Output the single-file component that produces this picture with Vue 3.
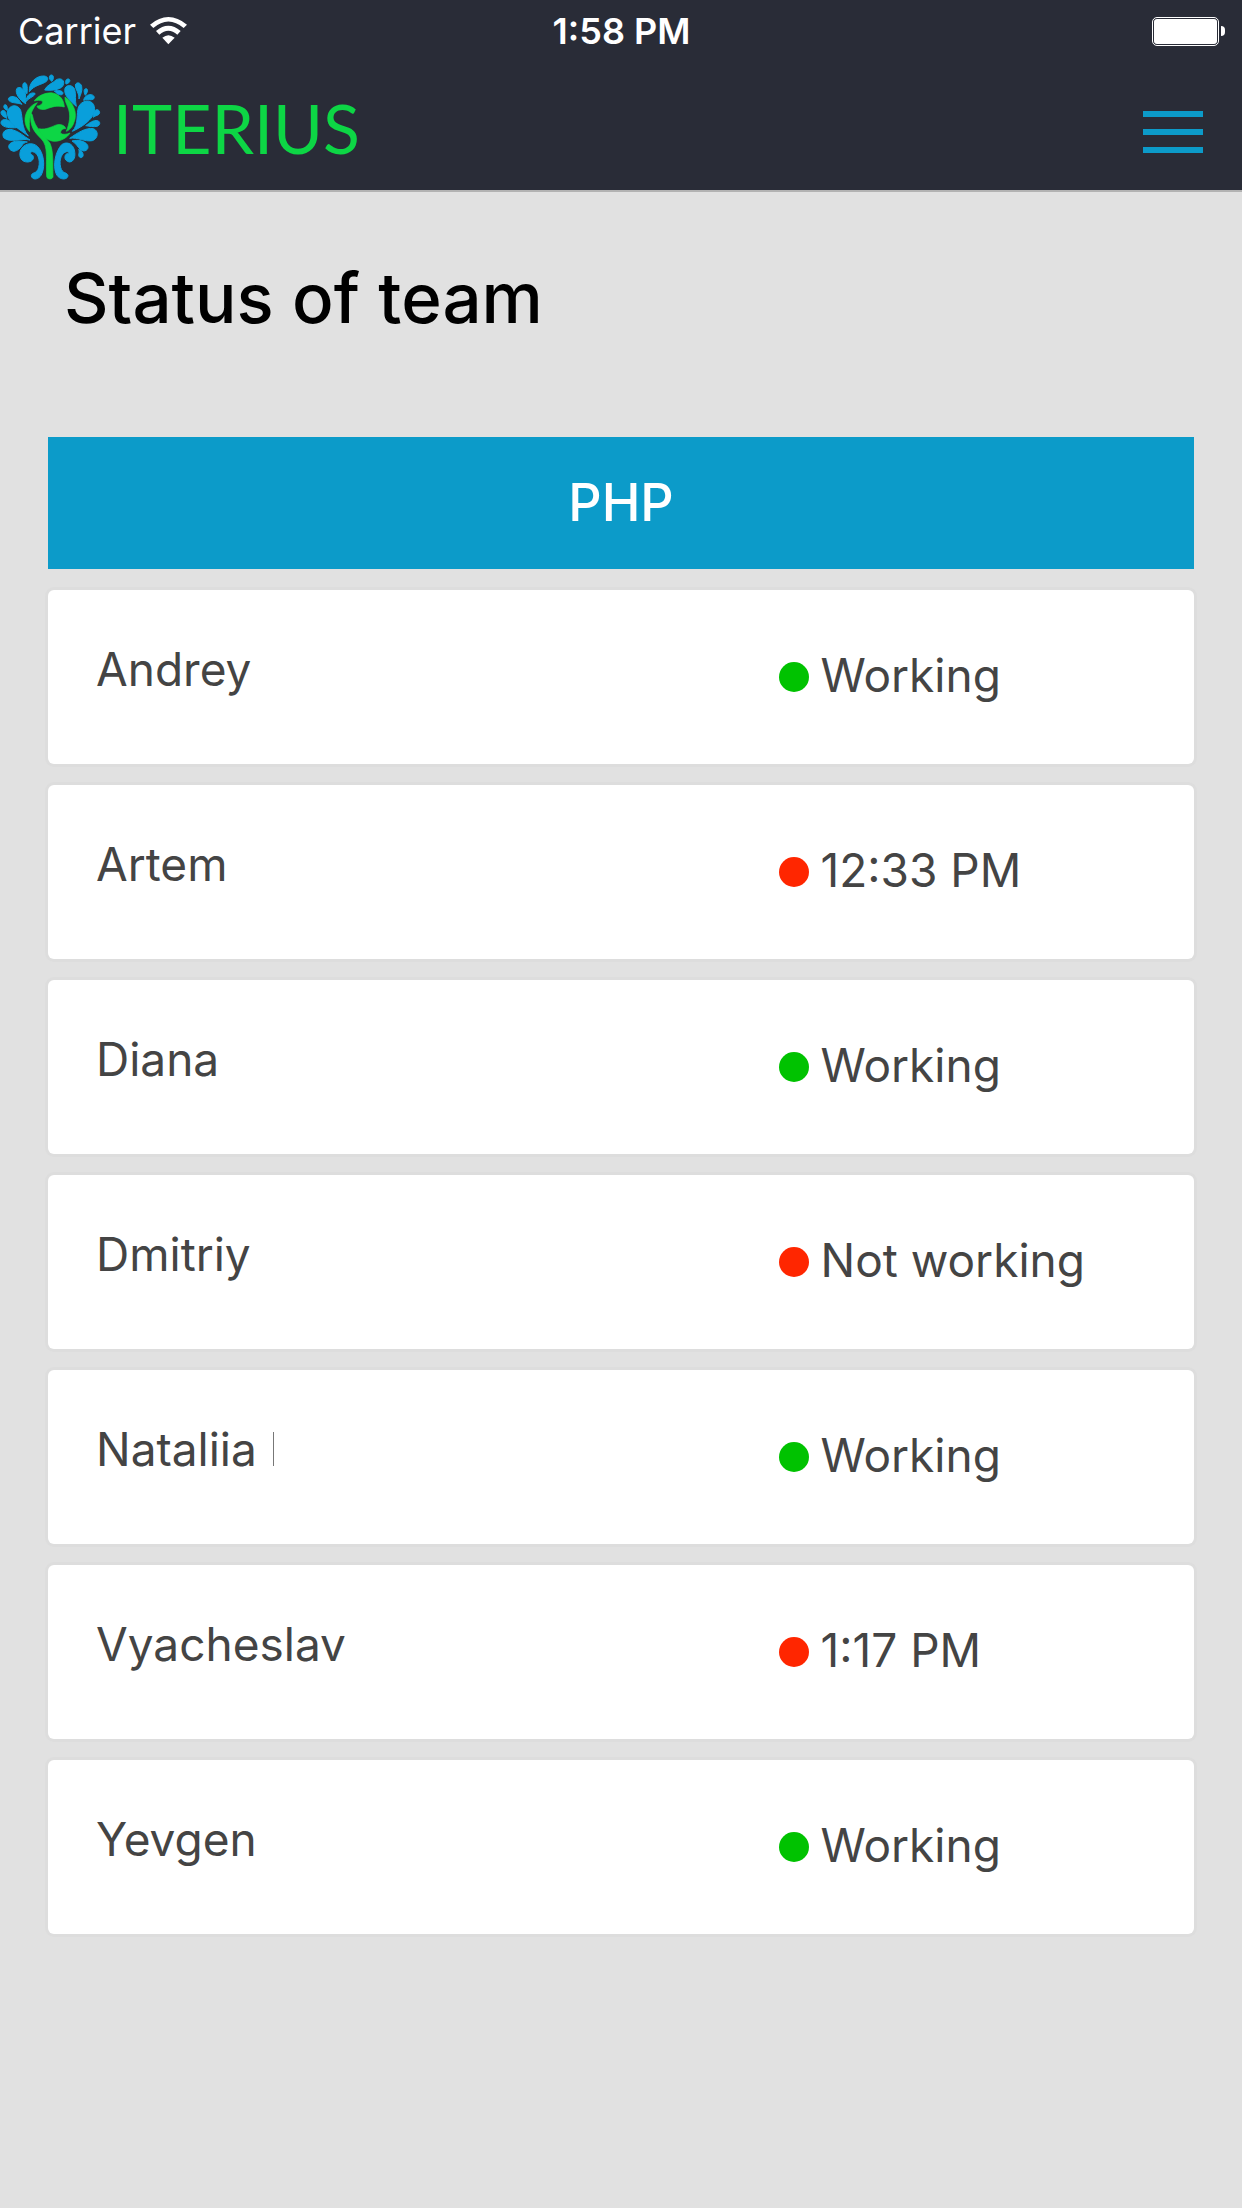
<script setup>
const team = [
  { name: 'Andrey', status: 'Working', online: true },
  { name: 'Artem', status: '12:33 PM', online: false },
  { name: 'Diana', status: 'Working', online: true },
  { name: 'Dmitriy', status: 'Not working', online: false },
  { name: 'Nataliia', status: 'Working', online: true, marker: true },
  { name: 'Vyacheslav', status: '1:17 PM', online: false },
  { name: 'Yevgen', status: 'Working', online: true }
];
</script>

<template>
  <div class="page">
    <header class="header">
      <div class="status-bar">
        <div class="carrier">
          <span>Carrier</span>
          <svg class="wifi" viewBox="0 0 111 84" aria-hidden="true">
            <path d="M0 23 Q55 -23 111 23 L101 33 Q55 -6 10 33Z" />
            <path d="M18 42 Q55 11 92 42 L82 53 Q55 30 28 53Z" />
            <path d="M37 62 Q55 47 74 62 L55 82Z" />
          </svg>
        </div>
        <div class="time">1:58 PM</div>
        <div class="battery">
          <span class="battery-body"></span>
          <span class="battery-tip"></span>
        </div>
      </div>
      <nav class="navbar">
        <a class="brand" href="#">
          <svg class="logo" viewBox="0 36 306 324" aria-hidden="true">
            <g class="drops">
              <path d="M88 95C86 68 108 47 132 48C144 49 147 58 138 65C124 75 104 74 88 95Z" />
              <path d="M156 64C147 60 145 47 153 45C161 44 163 54 156 64Z" />
              <path d="M134 90C140 75 158 70 168 60C178 53 193 57 191 71C189 88 160 93 134 90Z" />
              <path d="M198 72C195 62 199 56 206 57C212 59 211 69 198 72Z" />
              <path d="M163 93C175 90 188 92 189 99C189 107 175 107 163 93Z" />
              <path d="M229 139C207 121 190 103 195 85C200 73 218 74 224 88C229 104 224 120 229 139Z" />
              <path d="M237 117C239 100 225 88 226 75C229 65 242 67 245 79C248 94 241 104 237 117Z" />
              <path d="M256 106C250 95 252 85 259 86C265 88 263 97 256 106Z" />
              <path d="M251 121C253 109 263 103 274 104C285 106 286 118 275 119C266 120 259 118 251 121Z" />
              <path d="M217 214C237 194 228 160 236 140C245 121 272 117 281 134C293 162 265 192 217 214Z" />
              <path d="M280 172C279 160 282 150 291 149C301 150 302 163 291 166C286 168 283 169 280 172Z" />
              <path d="M257 197C268 189 281 179 293 182C302 185 301 196 291 199C280 201 270 199 257 197Z" />
              <path d="M209 235C232 219 257 202 280 206C297 212 295 236 277 242C254 246 234 231 209 235Z" />
              <path d="M216 243C233 238 256 243 263 256C268 270 253 277 243 270C232 261 229 250 216 243Z" />
              <path d="M236 268C245 273 251 279 249 288C246 296 236 294 236 284C237 278 239 275 236 268Z" />
              <path d="M81 101C67 92 65 70 73 68C84 68 82 88 81 101Z" />
              <path d="M77 131C60 121 44 101 50 86C57 77 71 86 75 97C79 108 75 119 77 131Z" />
              <path d="M78 125C79 106 92 95 105 100C107 108 88 112 78 125Z" />
              <path d="M66 133C52 127 29 131 25 118C26 107 43 108 51 114C59 120 60 127 66 133Z" />
              <path d="M22 151C11 148 8 136 15 134C22 134 22 143 22 151Z" />
              <path d="M85 228C60 208 21 190 22 156C27 133 54 131 62 151C69 175 63 202 85 228Z" />
              <path d="M21 175C13 171 2 167 3 156C6 148 17 151 18 160C19 167 19 171 21 175Z" />
              <path d="M50 203C33 204 9 204 3 190C2 178 15 176 25 181C36 187 41 198 50 203Z" />
              <path d="M90 240C64 234 29 250 11 233C3 216 18 205 37 209C60 215 72 230 90 240Z" />
              <path d="M82 246C65 246 66 270 42 274C27 272 22 259 30 251C43 240 64 243 82 246Z" />
              <path d="M94 347C96 335 111 343 116 322C122 298 112 277 98 275C90 275 89 281 97 285C103 290 102 304 84 306C64 307 56 290 61 273C68 252 96 243 113 260C131 279 136 315 126 340C119 360 96 362 94 347Z" />
              <path d="M204 347C202 335 187 343 182 322C176 298 186 277 200 275C208 275 209 281 201 281C193 284 190 302 208 306C222 305 228 290 223 270C218 249 198 244 185 254C167 273 158 315 168 340C175 360 202 362 204 347Z" />
            </g>
            <g class="tree">
              <path d="M92 162C90 200 102 215 124 237C146 258 137 300 140 350C142 359 158 359 159 350C158 310 161 275 150 250C137 229 103 206 97 165C95 160 92 160 92 162Z" />
              <path d="M112 128C90 135 73 158 75 184C77 200 84 210 89 215C87 180 87 160 112 128Z" />
              <path d="M103 123C112 107 140 96 158 99C180 103 192 120 193 141C170 135 155 141 139 147C126 151 112 147 111 138C119 139 127 132 129 125C121 119 112 121 103 123Z" />
              <path d="M195 111C220 127 234 160 222 187C217 203 207 211 199 214C208 190 214 165 203 140C199 130 194 122 195 111Z" />
              <path d="M116 206C140 211 157 198 172 194C185 192 196 198 197 206C187 205 181 212 182 220C189 225 200 223 210 219C203 232 183 245 160 244C138 240 123 225 116 206Z" />
            </g>
          </svg>
          <span class="brand-name">ITERIUS</span>
        </a>
        <button class="burger" type="button" aria-label="Menu">
          <span></span>
          <span></span>
          <span></span>
        </button>
      </nav>
    </header>

    <main class="content">
      <h1 class="title">Status of team</h1>
      <h2 class="group">PHP</h2>
      <ul class="members">
        <li v-for="member in team" :key="member.name" class="member">
          <div class="name">
            {{ member.name }}<span v-if="member.marker" class="marker"></span>
          </div>
          <div class="status">
            <span class="dot" :class="{ online: member.online }"></span>{{ member.status }}
          </div>
        </li>
      </ul>
    </main>
  </div>
</template>

<style>
body {
  background: #e1e1e1;
}
</style>

<style scoped>
.page {
  min-height: 100vh;
  background: #e1e1e1;
  color: #444;
  font-family: Inter, "Liberation Sans", sans-serif;
}
.header {
  background: #292c37;
  border-bottom: 2px solid #b2b2b2;
}
.status-bar {
  display: flex;
  align-items: center;
  justify-content: space-between;
  height: 62px;
  padding: 0 17px 0 18px;
  color: #fff;
  font-size: 36px;
  line-height: 62px;
}
.carrier,
.battery {
  display: flex;
  flex: 1;
  align-items: center;
}
.carrier {
  gap: 14px;
}
.wifi {
  width: 37px;
  height: 28px;
  fill: #fff;
}
.time {
  font-weight: 600;
}
.battery {
  justify-content: flex-end;
  gap: 2px;
}
.battery-body {
  box-sizing: border-box;
  width: 67px;
  height: 29px;
  padding: 1px;
  border: 1px solid #fff;
  border-radius: 5px;
  background: #fff content-box;
}
.battery-tip {
  width: 4px;
  height: 10px;
  border-radius: 0 4px 4px 0;
  background: #fff;
}
.navbar {
  display: flex;
  align-items: center;
  justify-content: space-between;
  height: 128px;
  padding-right: 39px;
}
.brand {
  display: flex;
  align-items: center;
  gap: 11px;
  color: #0dd645;
  text-decoration: none;
}
.logo {
  width: 102px;
  height: 108px;
}
.drops {
  fill: #099fdb;
  stroke: #099fdb;
  stroke-width: 3;
  stroke-linejoin: round;
}
.tree {
  fill: #0dd645;
  stroke: #0dd645;
  stroke-width: 2;
  stroke-linejoin: round;
}
.brand-name {
  padding-top: 4px;
  font-family: Lato, sans-serif;
  font-size: 68px;
  font-weight: 400;
  line-height: 80px;
}
.burger {
  display: flex;
  flex-direction: column;
  gap: 12px;
  width: 60px;
  margin-top: 12px;
  padding: 0;
  border: 0;
  background: none;
  cursor: pointer;
}
.burger span {
  height: 6px;
  background: #0c9bc9;
}
.content {
  padding: 66px 48px 48px;
}
.title {
  margin: 0 0 99px;
  padding-left: 16px;
  color: #000;
  font-size: 69px;
  font-weight: 500;
  line-height: 80px;
}
.group {
  margin: 0 0 21px;
  background: #0c9bc9;
  color: #fff;
  font-size: 52px;
  font-weight: 500;
  line-height: 132px;
  text-align: center;
}
.members {
  display: flex;
  flex-direction: column;
  gap: 21px;
  margin: 0;
  padding: 0;
  list-style: none;
}
.member {
  display: flex;
  box-sizing: border-box;
  min-height: 174px;
  padding: 51px 48px;
  border-radius: 6px;
  background: #fff;
  box-shadow: 0 0 0 3px #dddddd;
  font-size: 46px;
  line-height: 56px;
}
.name {
  flex: 0 0 65%;
}
.status {
  flex: 1;
  padding-top: 6px;
  white-space: nowrap;
}
.dot {
  display: inline-block;
  width: 30px;
  height: 30px;
  margin-right: 12px;
  border-radius: 50%;
  background: #ff2600;
}
.dot.online {
  background: #00c200;
}
.marker {
  display: inline-block;
  width: 1px;
  height: 34px;
  margin-left: 16px;
  background: #777;
}
</style>
